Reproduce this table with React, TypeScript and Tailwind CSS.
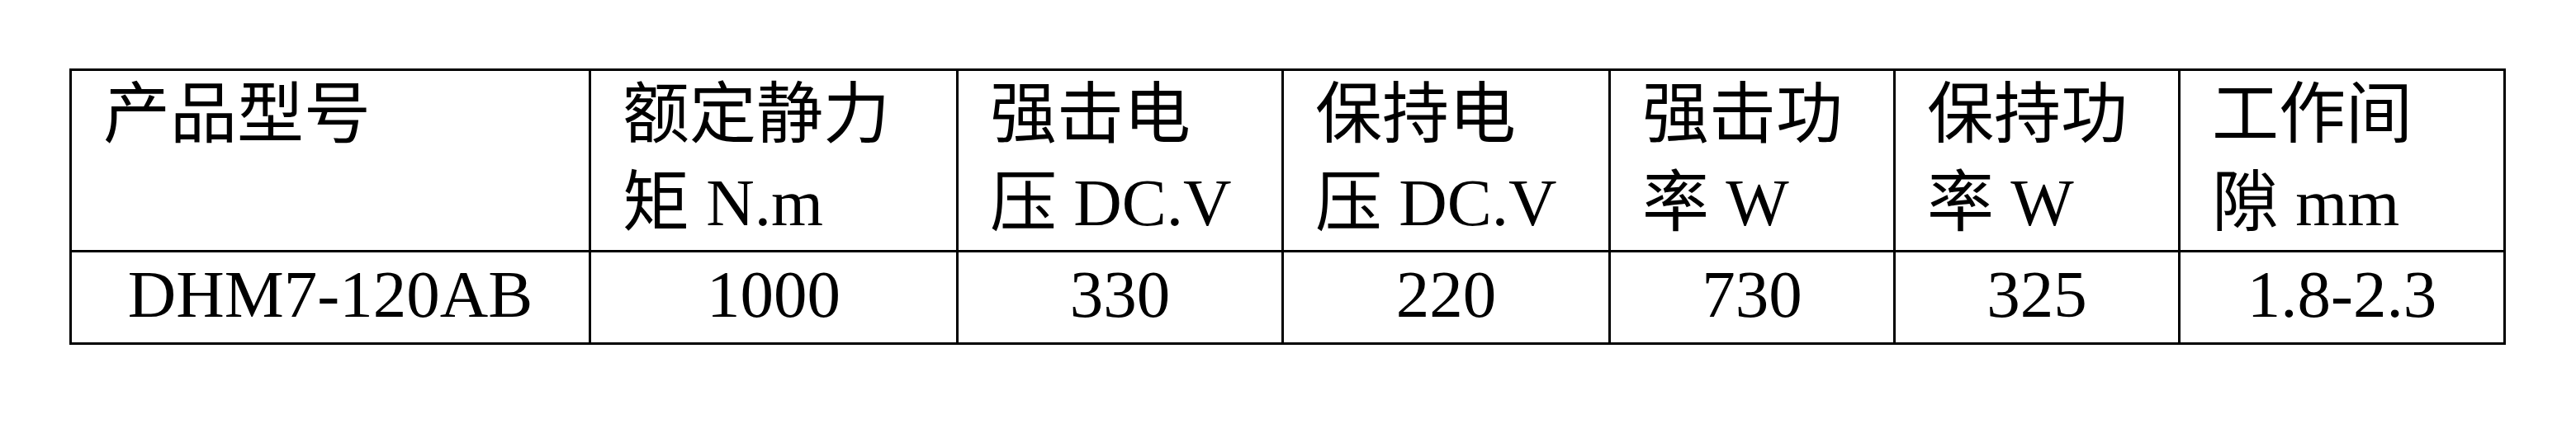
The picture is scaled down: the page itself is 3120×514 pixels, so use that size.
import React from "react";

const font = {
  fontFamily: '"Liberation Serif", "Noto Sans CJK SC", serif',
};

const headers: string[][] = [
  ["产品型号"],
  ["额定静力", "矩 N.m"],
  ["强击电", "压 DC.V"],
  ["保持电", "压 DC.V"],
  ["强击功", "率 W"],
  ["保持功", "率 W"],
  ["工作间", "隙 mm"],
];

const values = ["DHM7-120AB", "1000", "330", "220", "730", "325", "1.8-2.3"];

export default function App() {
  return (
    <div className="w-[3120px] h-[514px] bg-white pt-[83px] pl-[84px] text-black" style={font}>
      <div className="grid w-max grid-cols-[626px_442px_391px_393px_342px_342px_391px] grid-rows-[217px_109px] gap-[3px] bg-black p-[3px]">
        {headers.map((lines, i) => (
          <div key={"h" + i} className="bg-white pl-[38px] pt-0 text-[81px] leading-[107px] whitespace-nowrap">
            {lines.map((l, j) => (
              <div key={j}>{l}</div>
            ))}
          </div>
        ))}
        {values.map((v, i) => (
          <div key={"v" + i} className="flex items-center justify-center bg-white pb-[7px] text-[81px] leading-none whitespace-nowrap">
            {v}
          </div>
        ))}
      </div>
    </div>
  );
}
